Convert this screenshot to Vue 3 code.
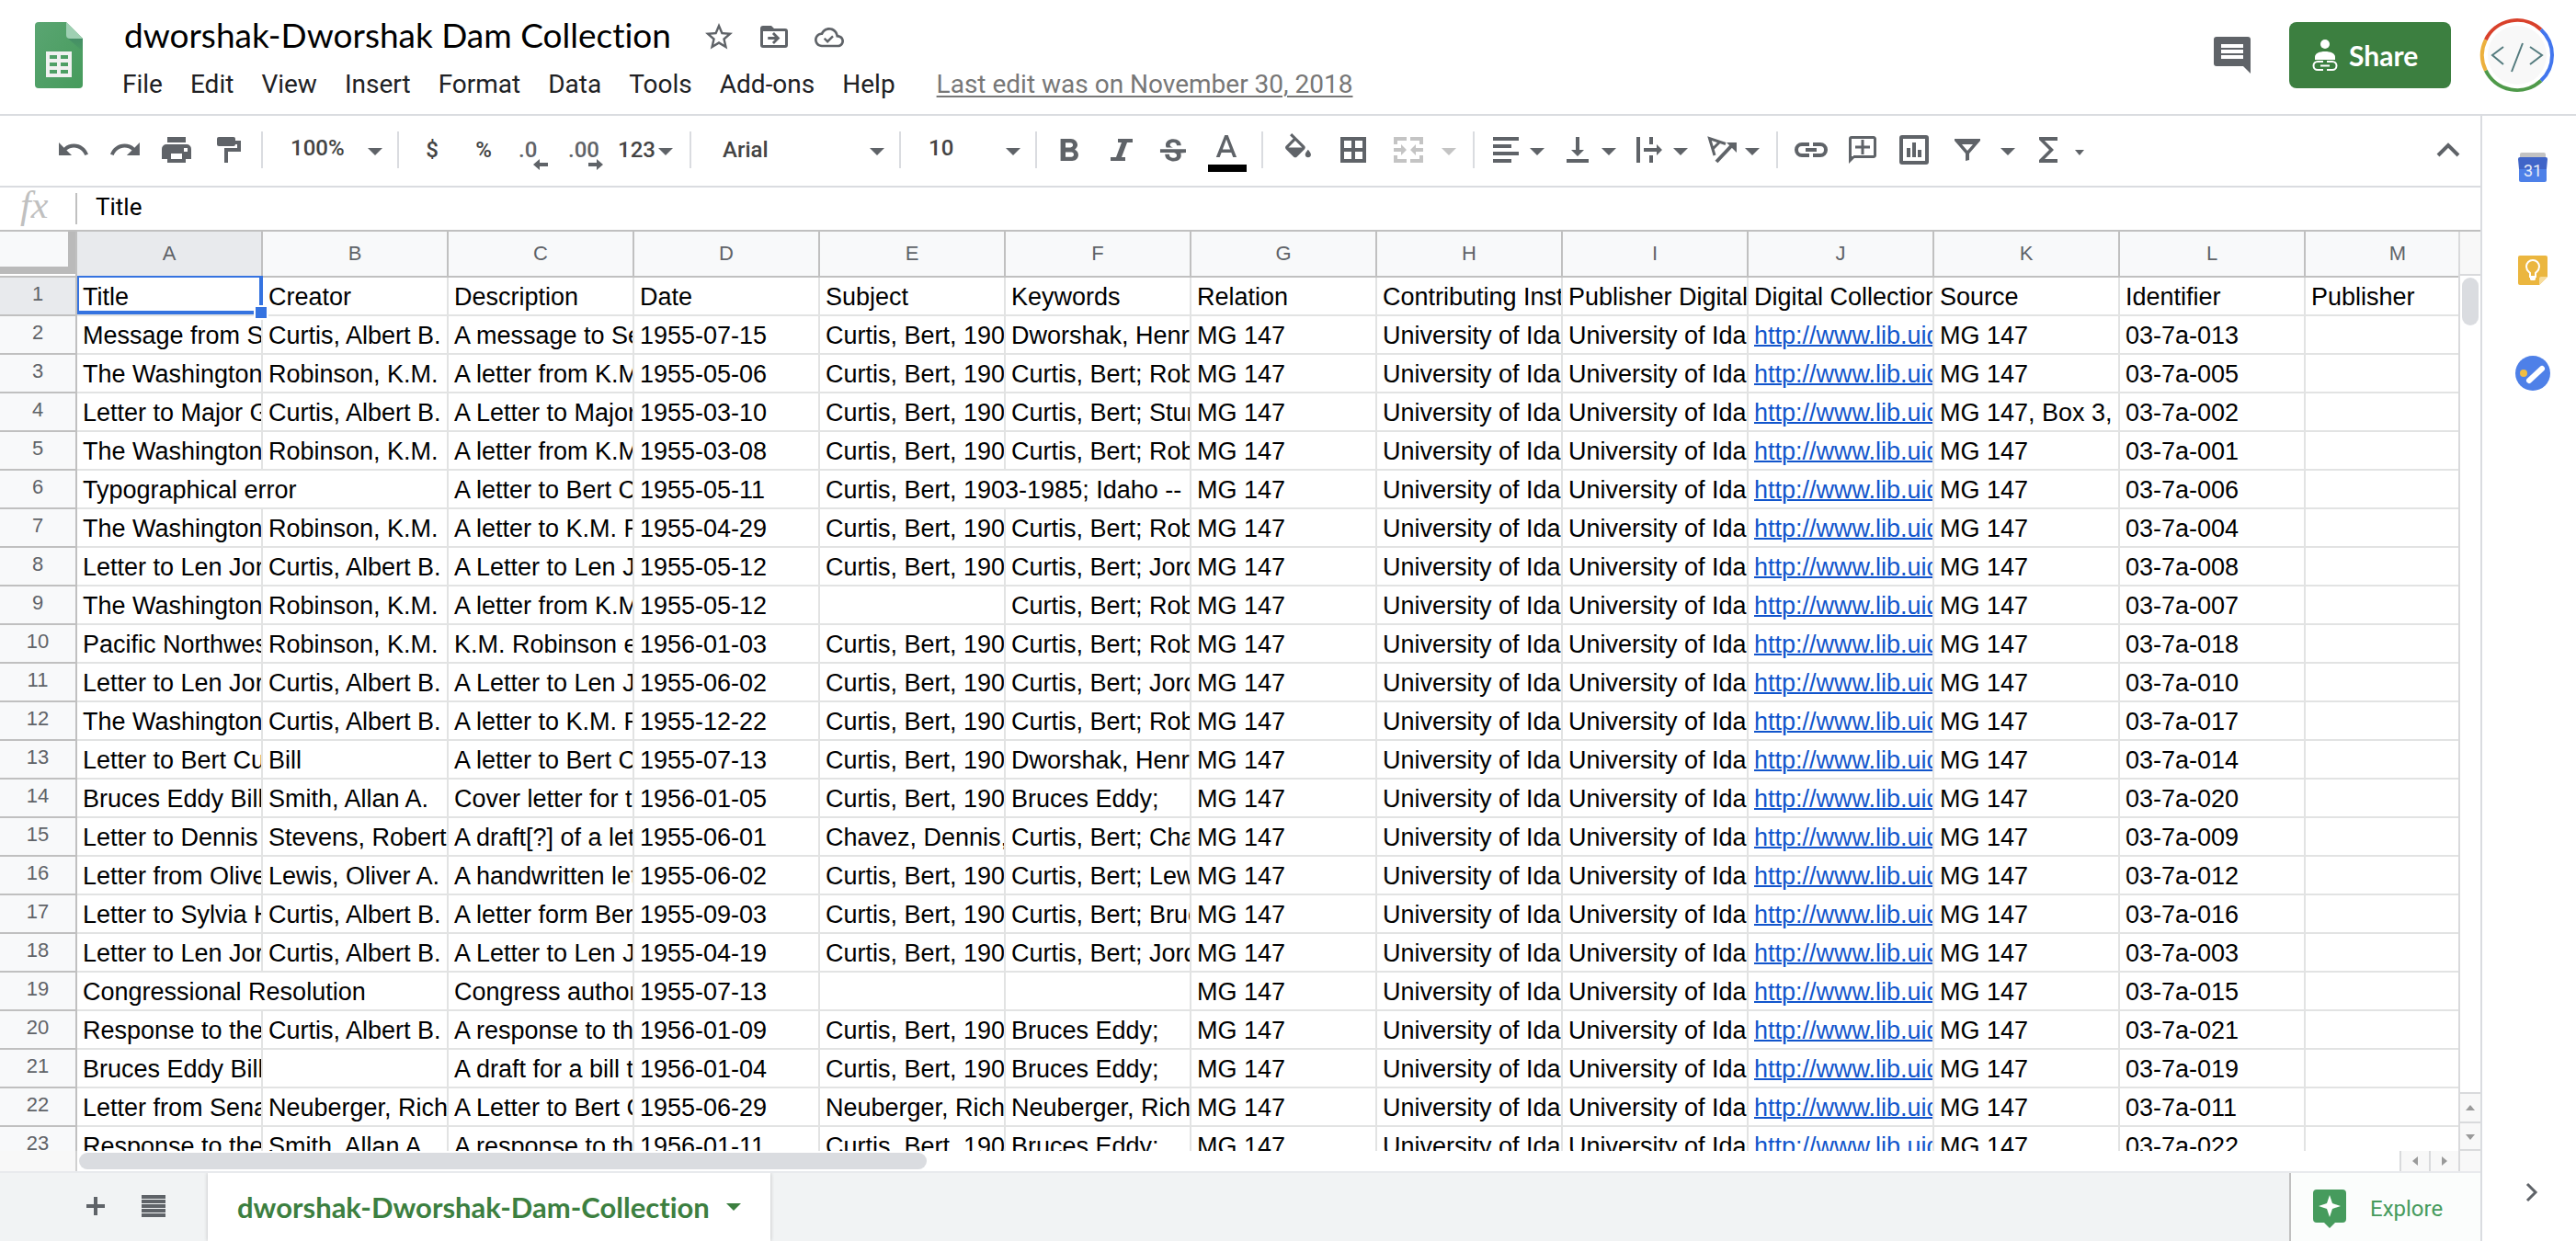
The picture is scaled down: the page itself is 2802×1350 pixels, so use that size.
<script setup>
import { ref } from 'vue'

const title = ref('dworshak-Dworshak Dam Collection')
const formula = ref('Title')
const menus = ['File', 'Edit', 'View', 'Insert', 'Format', 'Data', 'Tools', 'Add-ons', 'Help']
const columns = 'ABCDEFGHIJKLM'.split('')
const headings = ['Title', 'Creator', 'Description', 'Date', 'Subject', 'Keywords', 'Relation', 'Contributing Institution', 'Publisher Digital', 'Digital Collection', 'Source', 'Identifier', 'Publisher']

const CURTIS = 'Curtis, Albert B.'
const ROBINSON = 'Robinson, K.M.'
const BERT = 'Curtis, Bert, 1903-1985'
const ROB = 'Curtis, Bert; Robinson'

// title, creator, description, date, subject, keywords, identifier, source
const records = [
  ['Message from Senator', CURTIS, 'A message to Senator', '1955-07-15', BERT, 'Dworshak, Henry C.', '013'],
  ['The Washington Water', ROBINSON, 'A letter from K.M. Robinson', '1955-05-06', BERT, ROB, '005'],
  ['Letter to Major General', CURTIS, 'A Letter to Major General', '1955-03-10', BERT, 'Curtis, Bert; Sturgis', '002', 'MG 147, Box 3, Folder'],
  ['The Washington Water', ROBINSON, 'A letter from K.M. Robinson', '1955-03-08', BERT, ROB, '001'],
  ['Typographical error', null, 'A letter to Bert Curtis', '1955-05-11', 'Curtis, Bert, 1903-1985; Idaho -- Dams', null, '006'],
  ['The Washington Water', ROBINSON, 'A letter to K.M. Robinson', '1955-04-29', BERT, ROB, '004'],
  ['Letter to Len Jordan', CURTIS, 'A Letter to Len Jordan', '1955-05-12', BERT, 'Curtis, Bert; Jordan', '008'],
  ['The Washington Water', ROBINSON, 'A letter from K.M. Robinson', '1955-05-12', '', ROB, '007'],
  ['Pacific Northwest', ROBINSON, 'K.M. Robinson encloses', '1956-01-03', BERT, ROB, '018'],
  ['Letter to Len Jordan', CURTIS, 'A Letter to Len Jordan', '1955-06-02', BERT, 'Curtis, Bert; Jordan', '010'],
  ['The Washington Water', CURTIS, 'A letter to K.M. Robinson', '1955-12-22', BERT, ROB, '017'],
  ['Letter to Bert Curtis', 'Bill', 'A letter to Bert Curtis', '1955-07-13', BERT, 'Dworshak, Henry C.', '014'],
  ['Bruces Eddy Bill', 'Smith, Allan A.', 'Cover letter for the', '1956-01-05', BERT, 'Bruces Eddy;', '020'],
  ['Letter to Dennis Chavez', 'Stevens, Robert', 'A draft[?] of a letter', '1955-06-01', 'Chavez, Dennis, 1888', 'Curtis, Bert; Chavez', '009'],
  ['Letter from Oliver Lewis', 'Lewis, Oliver A.', 'A handwritten letter', '1955-06-02', BERT, 'Curtis, Bert; Lewis', '012'],
  ['Letter to Sylvia Harris', CURTIS, 'A letter form Bert', '1955-09-03', BERT, 'Curtis, Bert; Bruces', '016'],
  ['Letter to Len Jordan', CURTIS, 'A Letter to Len Jordan', '1955-04-19', BERT, 'Curtis, Bert; Jordan', '003'],
  ['Congressional Resolution', null, 'Congress authorizes', '1955-07-13', '', '', '015'],
  ['Response to the', CURTIS, 'A response to the', '1956-01-09', BERT, 'Bruces Eddy;', '021'],
  ['Bruces Eddy Bill', '', 'A draft for a bill to', '1956-01-04', BERT, 'Bruces Eddy;', '019'],
  ['Letter from Senator', 'Neuberger, Richard', 'A Letter to Bert Curtis', '1955-06-29', 'Neuberger, Richard', 'Neuberger, Richard', '011'],
  ['Response to the', 'Smith, Allan A.', 'A response to the', '1956-01-11', BERT, 'Bruces Eddy;', '022'],
]

// A null value means that the text before it runs on into that cell.
function toCells(values) {
  const cells = []
  for (const text of values) {
    if (text === null) cells[cells.length - 1].span = 2
    else cells.push({ text, span: 1 })
  }
  return cells
}

const rows = [
  toCells(headings),
  ...records.map((r) =>
    toCells([...r.slice(0, 6), 'MG 147', 'University of Idaho', 'University of Idaho', 'http://www.lib.uidaho.edu', r[7] || 'MG 147', '03-7a-' + r[6], '']),
  ),
]
</script>

<template>
  <div class="app">
    <header class="header">
      <svg class="logo" viewBox="0 0 52 72" aria-label="Sheets">
        <defs>
          <linearGradient id="leaf" x1="0" y1="0" x2="1" y2="1">
            <stop offset="0" stop-color="#5aa572" />
            <stop offset="1" stop-color="#469b5c" />
          </linearGradient>
          <linearGradient id="fold" x1="0" y1="0" x2="0" y2="1">
            <stop offset="0" stop-color="#448d66" />
            <stop offset="1" stop-color="#4a9c62" />
          </linearGradient>
        </defs>
        <path fill="url(#leaf)" d="M4 0h30l18 18v50a4 4 0 0 1-4 4H4a4 4 0 0 1-4-4V4a4 4 0 0 1 4-4z" />
        <path fill="url(#fold)" d="M35 17l17 15V18z" />
        <path fill="#9fd0b3" d="M34 0l18 18H38a4 4 0 0 1-4-4z" />
        <path fill="#f1f1f1" fill-rule="evenodd" d="M12 32h28v28H12zM16 36v4h8v-4zM28 36v4h8v-4zM16 44v4h8v-4zM28 44v4h8v-4zM16 52v4h8v-4zM28 52v4h8v-4z" />
      </svg>
      <div class="heading">
        <div class="title-row">
          <input v-model="title" class="title" aria-label="Document name" />
          <button class="plain" aria-label="Star">
            <svg class="i36" viewBox="0 0 24 24"><path d="M22 9.24l-7.19-.62L12 2 9.19 8.63 2 9.24l5.46 4.73L5.82 21 12 17.27 18.18 21l-1.63-7.03L22 9.24zM12 15.4l-3.76 2.27 1-4.28-3.32-2.88 4.38-.38L12 6.1l1.71 4.04 4.38.38-3.32 2.88 1 4.28L12 15.4z" /></svg>
          </button>
          <button class="plain" aria-label="Move">
            <svg class="i36" viewBox="0 0 24 24">
              <path fill-rule="evenodd" d="M20 6h-8l-2-2H4a2 2 0 0 0-2 2v12a2 2 0 0 0 2 2h16a2 2 0 0 0 2-2V8a2 2 0 0 0-2-2zM4 8h16v10H4z" />
              <path fill="none" stroke="currentColor" stroke-width="1.9" d="M7.5 13h7M11.3 9.4l3.6 3.6-3.6 3.6" />
            </svg>
          </button>
          <button class="plain" aria-label="Saved to Drive">
            <svg class="i36" viewBox="-1.5 -2 27 27">
              <path d="M19.35 10.04C18.67 6.59 15.64 4 12 4 9.11 4 6.6 5.64 5.35 8.04 2.34 8.36 0 10.91 0 14c0 3.31 2.69 6 6 6h13c2.76 0 5-2.24 5-5 0-2.64-2.05-4.78-4.65-4.96zM19 18H6c-2.21 0-4-1.79-4-4 0-2.05 1.53-3.76 3.56-3.97l1.07-.11.5-.95C8.08 7.14 9.94 6 12 6c2.62 0 4.88 1.86 5.39 4.43l.3 1.5 1.53.11c1.56.1 2.78 1.41 2.78 2.96 0 1.65-1.35 3-3 3z" />
              <path fill="none" stroke="currentColor" stroke-width="1.8" d="M8 12.8l2.6 2.6 4.4-4.4" />
            </svg>
          </button>
        </div>
        <nav class="menus">
          <button v-for="m in menus" :key="m" class="plain menu">{{ m }}</button>
          <a href="#" class="last-edit">Last edit was on November 30, 2018</a>
        </nav>
      </div>
      <div class="actions">
        <button class="plain" aria-label="Comments">
          <svg class="i40" viewBox="0 0 40 40"><path fill-rule="evenodd" d="M3 0h34a3 3 0 0 1 3 3v37l-8-8H3a3 3 0 0 1-3-3V3a3 3 0 0 1 3-3zM8 8v4h24V8zM8 14v4h24v-4zM8 20v4h24v-4z" /></svg>
        </button>
        <button class="share">
          <svg class="share-icon" viewBox="0 0 28 36">
            <circle cx="14" cy="6" r="5" />
            <path d="M3 23v-3c0-4 5-6 11-6s11 2 11 6v3z" />
            <path fill="none" stroke="#fff" stroke-width="2" d="M12 25H6a4 4 0 0 0 0 9h6M16 25h6a4 4 0 0 1 0 9h-6M9 29.500h10" />
          </svg>
          Share
        </button>
        <button class="plain" aria-label="Account">
          <svg class="avatar" viewBox="0 0 80 80" stroke-width="4">
            <circle cx="40" cy="40" r="32" fill="#f8f8f8" />
            <path stroke="#d9412b" d="M5.800 23.300A38 38 0 0 1 65.900 12.200" />
            <path stroke="#4276ee" d="M65.900 12.200A38 38 0 0 1 65.900 67.800" />
            <path stroke="#4f9a4a" d="M65.900 67.800A38 38 0 0 1 5.800 56.700" />
            <path stroke="#ecb03d" d="M5.800 56.700A38 38 0 0 1 5.800 23.300" />
            <path stroke="#547b7e" stroke-width="2" d="M25 31L13 40l12 10M46 27L34 58M54 31l13 9-13 10" />
          </svg>
        </button>
      </div>
    </header>

    <div class="body">
      <main class="main">
        <div class="toolbar">
          <button class="tool" aria-label="Undo"><svg viewBox="0 0 32 36"><path transform="translate(-3.1 -.9) scale(1.56)" d="M12.500 8c-2.650 0-5.050.99-6.900 2.600L2 7v9h9l-3.620-3.620c1.390-1.160 3.160-1.880 5.120-1.880 3.540 0 6.550 2.310 7.600 5.500l2.370-.78C21.080 11.030 17.150 8 12.500 8z" /></svg></button>
          <button class="tool" aria-label="Redo"><svg viewBox="0 0 32 36"><path transform="translate(-2.4 -.9) scale(1.56)" d="M18.400 10.600C16.550 8.990 14.150 8 11.500 8c-4.650 0-8.580 3.030-9.960 7.220L3.900 16c1.050-3.190 4.050-5.500 7.600-5.500 1.950 0 3.730.72 5.120 1.880L13 16h9V7l-3.600 3.600z" /></svg></button>
          <button class="tool" aria-label="Print"><svg viewBox="0 0 32 36"><path fill-rule="evenodd" d="M6 4h20v6H6zM5 12h22a5 5 0 0 1 5 5v11h-6v4H6v-4H0V17a5 5 0 0 1 5-5zM10 22v6h12v-6zM24 16v4h4v-4z" /></svg></button>
          <button class="tool" aria-label="Paint format"><svg viewBox="0 0 32 36"><rect x="4" y="4" width="20" height="10" rx="2" /><path d="M24 8h6v12H16v12h-4V16h14v-4h-2z" /></svg></button>
          <i class="sep"></i>
          <label class="drop raised"><select aria-label="Zoom"><option>100%</option></select><svg class="caret" viewBox="0 0 16 8"><path d="M0 0h16L8 8z" /></svg></label>
          <i class="sep"></i>
          <button class="tool text">$</button>
          <button class="tool text">%</button>
          <button class="tool" aria-label="Decrease decimal places"><svg viewBox="0 0 32 36"><text class="digits" x="-2" y="26">.0</text><path d="M14 34l7-6v4h9v4h-9v4z" /></svg></button>
          <button class="tool" aria-label="Increase decimal places"><svg viewBox="0 0 32 36"><text class="digits" x="-4" y="26">.00</text><path d="M34 34l-7-6v4h-9v4h9v4z" /></svg></button>
          <button class="tool text formats">123<svg class="caret" viewBox="0 0 16 8"><path d="M0 0h16L8 8z" /></svg></button>
          <i class="sep"></i>
          <label class="drop wide"><select aria-label="Font"><option>Arial</option></select><svg class="caret" viewBox="0 0 16 8"><path d="M0 0h16L8 8z" /></svg></label>
          <i class="sep"></i>
          <label class="drop raised"><select aria-label="Font size"><option>10</option></select><svg class="caret" viewBox="0 0 16 8"><path d="M0 0h16L8 8z" /></svg></label>
          <i class="sep"></i>
          <button class="tool" aria-label="Bold"><svg viewBox="0 0 32 36"><path transform="translate(-7 -.86) scale(1.8 1.714)" d="M15.600 10.790c.97-.67 1.650-1.770 1.650-2.790 0-2.260-1.750-4-4-4H7v14h7.040c2.090 0 3.710-1.700 3.710-3.790 0-1.520-.86-2.820-2.150-3.420zM10 6.500h3c.83 0 1.500.67 1.500 1.500s-.67 1.500-1.500 1.500h-3v-3zm3.500 9H10v-3h3.500c.83 0 1.500.67 1.500 1.500s-.67 1.500-1.500 1.500z" /></svg></button>
          <button class="tool" aria-label="Italic"><svg viewBox="0 0 32 36"><path d="M12 6h16v4h-6l-6 16h4v4H4v-4h6l6-16h-4z" /></svg></button>
          <button class="tool" aria-label="Strikethrough"><svg viewBox="0 0 32 36"><path transform="translate(-2.7 1.6) scale(1.556)" d="M7.240 8.750c-.26-.48-.39-1.030-.39-1.670 0-.61.13-1.160.4-1.670.26-.5.63-.93 1.110-1.290.48-.35 1.050-.63 1.700-.83.66-.19 1.390-.29 2.180-.29.81 0 1.540.11 2.210.34.66.22 1.230.54 1.690.94.47.4.83.88 1.080 1.430.25.55.38 1.150.38 1.810h-3.010c0-.31-.05-.59-.15-.85-.09-.27-.24-.49-.44-.68-.2-.19-.45-.33-.75-.44-.3-.1-.66-.16-1.060-.16-.39 0-.74.04-1.030.13-.29.09-.53.21-.72.36-.19.16-.34.34-.44.55-.1.21-.15.43-.15.66 0 .48.25.88.74 1.210.38.25.77.48 1.410.7H7.390c-.05-.08-.11-.17-.15-.25zM21 12.500v-2.500H3v2.500h9.620c.18.07.4.14.55.2.37.17.66.34.87.51.21.17.35.36.43.57.07.2.11.43.11.69 0 .23-.05.45-.14.66-.09.2-.23.38-.42.53-.19.15-.42.26-.71.35-.29.08-.63.13-1.010.13-.43 0-.83-.04-1.180-.13s-.66-.23-.91-.42c-.25-.19-.45-.44-.59-.75-.14-.31-.25-.76-.25-1.210H6.400c0 .55.08 1.130.24 1.580.16.45.37.85.65 1.210.28.35.6.66.98.92.37.26.78.48 1.220.65.44.17.9.3 1.380.39.48.08.96.13 1.440.13.8 0 1.530-.09 2.180-.28s1.210-.45 1.670-.79c.46-.34.82-.77 1.070-1.270s.38-1.070.38-1.710c0-.6-.1-1.140-.31-1.610z" /></svg></button>
          <button class="tool w36" aria-label="Text color"><svg viewBox="0 0 36 36"><path transform="translate(-2.6 -3.1) scale(1.714)" d="M11 3L5.500 17h2.250l1.120-3h6.250l1.120 3h2.250L13 3h-2zm-1.380 9L12 5.670 14.380 12H9.620z" /><path fill="#000" d="M-2 34h42v8H-2z" /></svg></button>
          <i class="sep"></i>
          <button class="tool w36" aria-label="Fill color"><svg viewBox="0 0 36 36"><path transform="translate(-.6 0) scale(1.55)" d="M16.560 8.940L7.620 0 6.210 1.410l2.380 2.380-5.150 5.150c-.59.59-.59 1.540 0 2.120l5.500 5.500c.29.29.68.44 1.060.44s.77-.15 1.060-.44l5.500-5.500c.59-.58.59-1.530 0-2.120zM5.210 10L10 5.210 14.790 10H5.210zM19 11.500s-2 2.170-2 3.500c0 1.100.9 2 2 2s2-.9 2-2c0-1.330-2-3.500-2-3.500z" /></svg></button>
          <button class="tool w36" aria-label="Borders"><svg viewBox="0 0 36 36"><path fill-rule="evenodd" d="M4 4h28v28H4zM8 8v8h8V8zM20 8v8h8V8zM8 20v8h8v-8zM20 20v8h8v-8z" /></svg></button>
          <button class="tool pair merge" disabled aria-label="Merge cells"><svg class="w36" viewBox="0 0 36 36"><path d="M2 4h14v4H6v4H2zM20 4h14v8h-4V8H20zM2 24h4v4h10v4H2zM30 24h4v8H20v-4h10zM2 16h8v-4l6 6-6 6v-4H2zM34 16h-8v-4l-6 6 6 6v-4h8z" /></svg><svg class="caret" viewBox="0 0 16 8"><path d="M0 0h16L8 8z" /></svg></button>
          <i class="sep"></i>
          <button class="tool pair" aria-label="Horizontal align"><svg viewBox="0 0 32 36"><path d="M0 4h28v4H0zM0 12h20v4H0zM0 20h28v4H0zM0 28h20v4H0z" /></svg><svg class="caret" viewBox="0 0 16 8"><path d="M0 0h16L8 8z" /></svg></button>
          <button class="tool pair" aria-label="Vertical align"><svg viewBox="0 0 32 36"><path d="M2 28h24v4H2zM12 4h4v14h5l-7 7-7-7h5z" /></svg><svg class="caret" viewBox="0 0 16 8"><path d="M0 0h16L8 8z" /></svg></button>
          <button class="tool pair" aria-label="Text wrapping"><svg viewBox="0 0 32 36"><path d="M0 4h4v28H0zM14 4h4v8h-4zM14 24h4v8h-4zM8 16h14v-4l6 6-6 6v-4H8z" /></svg><svg class="caret" viewBox="0 0 16 8"><path d="M0 0h16L8 8z" /></svg></button>
          <button class="tool pair" aria-label="Text rotation"><svg viewBox="0 0 32 36"><path fill="none" stroke="currentColor" stroke-width="3" d="M19 11.500L1.500 5.500 7 24M13 9l-8 8" /><path fill="none" stroke="currentColor" stroke-width="4" d="M9 31l16-17" /><path d="M20 10h11v11z" /></svg><svg class="caret" viewBox="0 0 16 8"><path d="M0 0h16L8 8z" /></svg></button>
          <i class="sep"></i>
          <button class="tool" aria-label="Insert link"><svg viewBox="0 0 32 36"><path fill="none" stroke="currentColor" stroke-width="4" d="M14 12H6a6 6 0 0 0 0 12h8M18 12h8a6 6 0 0 1 0 12h-8M10 18h12" /></svg></button>
          <button class="tool" aria-label="Insert comment"><svg viewBox="0 0 32 36"><path fill="none" stroke="currentColor" stroke-width="3" d="M2.500 30V6a1.500 1.500 0 0 1 1.500-1.500h24a1.500 1.500 0 0 1 1.500 1.500v18a1.500 1.500 0 0 1-1.500 1.500H6M8 15h16M16 7v16" /><path d="M1 25h8l-8 8z" /></svg></button>
          <button class="tool" aria-label="Insert chart"><svg viewBox="0 0 32 36"><rect x="2" y="4" width="28" height="28" rx="1" fill="none" stroke="currentColor" stroke-width="4" /><path d="M8 16h4v10H8zM14 10h4v16h-4zM20 18h4v8h-4z" /></svg></button>
          <button class="tool pair filter" aria-label="Filter"><svg viewBox="0 0 32 36"><path fill-rule="evenodd" d="M4 6h28v2L20 22v7l-4 1v-8L4 8zM12 12l6 7 6-7z" /></svg><svg class="caret" viewBox="0 0 16 8"><path d="M0 0h16L8 8z" /></svg></button>
          <button class="tool pair functions" aria-label="Functions"><svg viewBox="0 0 32 36"><path d="M4 4h20v4H10l10 10-10 10h14v4H4v-3l11-11L4 7z" /></svg><svg class="caret small" viewBox="0 0 16 8"><path d="M3 2h10l-5 6z" /></svg></button>
          <button class="tool hide" aria-label="Hide the menus"><svg viewBox="0 0 32 36"><path fill="none" stroke="currentColor" stroke-width="4" d="M6 24l11-11 11 11" /></svg></button>
        </div>

        <div class="formula">
          <span class="fx">fx</span>
          <input v-model="formula" class="formula-input" aria-label="Formula bar" />
        </div>

        <div class="sheet">
          <div class="viewport">
            <table>
              <colgroup>
                <col class="col-head" />
                <col v-for="c in columns" :key="c" class="col" />
              </colgroup>
              <thead>
                <tr>
                  <td class="corner"><div class="select-all"></div></td>
                  <th v-for="c in columns" :key="c" scope="col" :class="{ active: c === 'A' }">{{ c }}</th>
                </tr>
              </thead>
              <tbody>
                <tr v-for="(cells, r) in rows" :key="r">
                  <th scope="row" :class="{ active: r === 0 }">{{ r + 1 }}</th>
                  <td v-for="(cell, c) in cells" :key="c" :colspan="cell.span">
                    <div class="value">
                      <a v-if="cell.text.startsWith('http')" :href="cell.text">{{ cell.text }}</a>
                      <template v-else>{{ cell.text }}</template>
                    </div>
                    <div v-if="r === 0 && c === 0" class="selection"><i class="handle"></i></div>
                  </td>
                </tr>
              </tbody>
            </table>
          </div>
          <div class="vscroll">
            <div class="vtop"></div>
            <div class="vtrack"><div class="vthumb"></div></div>
            <button class="step" aria-label="Scroll up"><svg viewBox="0 0 10 6"><path d="M0 6h10L5 0z" /></svg></button>
            <button class="step" aria-label="Scroll down"><svg viewBox="0 0 10 6"><path d="M0 0h10L5 6z" /></svg></button>
          </div>
        </div>
        <div class="hscroll">
          <div class="hleft"></div>
          <div class="htrack"><div class="hthumb"></div></div>
          <button class="hstep" aria-label="Scroll left"><svg viewBox="0 0 6 10"><path d="M6 0v10L0 5z" /></svg></button>
          <button class="hstep" aria-label="Scroll right"><svg viewBox="0 0 6 10"><path d="M0 0v10l6-5z" /></svg></button>
          <div class="hcorner"></div>
        </div>

        <footer class="tabs">
          <button class="plain add" aria-label="Add sheet"><svg viewBox="0 0 20 20"><path d="M8 0h4v8h8v4h-8v8H8v-8H0V8h8z" /></svg></button>
          <button class="plain all" aria-label="All sheets"><svg viewBox="0 0 26 24"><path d="M0 0h26v4H0zM0 5h26v4H0zM0 10h26v4H0zM0 15h26v4H0zM0 20h26v4H0z" /></svg></button>
          <button class="tab">dworshak-Dworshak-Dam-Collection<svg class="caret" viewBox="0 0 16 8"><path d="M0 0h16L8 8z" /></svg></button>
          <button class="explore">
            <svg viewBox="0 0 36 42"><path d="M4 0h28a4 4 0 0 1 4 4v28a4 4 0 0 1-4 4h-8l-6 6-6-6H4a4 4 0 0 1-4-4V4a4 4 0 0 1 4-4z" /><path fill="#fff" d="M18 6l3 9 9 3-9 3-3 9-3-9-9-3 9-3z" /></svg>
            Explore
          </button>
        </footer>
      </main>

      <aside class="side">
        <button class="plain" aria-label="Calendar">
          <svg class="app-icon" viewBox="0 0 40 40">
            <path fill="#c2c2c2" d="M8 4h24a2 2 0 0 1 2 2v4H6V6a2 2 0 0 1 2-2z" />
            <path fill="#4065c8" d="M4 11q0-2 2-2h28q2 0 2 2l-1 11H5z" />
            <path fill="#4d80e8" d="M5 22h30v12a2 2 0 0 1-2 2H7a2 2 0 0 1-2-2z" />
            <text x="20" y="30" text-anchor="middle" class="day">31</text>
          </svg>
        </button>
        <button class="plain" aria-label="Keep">
          <svg class="app-icon" viewBox="0 0 40 40">
            <path fill="#ebb63f" d="M6 4h28a2 2 0 0 1 2 2v21l-9 9H6a2 2 0 0 1-2-2V6a2 2 0 0 1 2-2z" />
            <path fill="#f7dc9c" d="M27 36v-7a2 2 0 0 1 2-2h7z" />
            <path fill="none" stroke="#fff" stroke-width="2" d="M17 27v-4c-2-2-4-3-4-7a7 7 0 0 1 14 0c0 4-2 5-4 7v4z" />
            <path fill="#fff" d="M17 26h6v4l-1 1h-4l-1-1z" />
          </svg>
        </button>
        <button class="plain" aria-label="Tasks">
          <svg class="app-icon" viewBox="0 0 40 40">
            <circle cx="20" cy="20" r="19" fill="#4e80e8" />
            <circle cx="10" cy="20" r="4" fill="#f2bd42" />
            <path fill="none" stroke="#fff" stroke-width="6" stroke-linecap="round" d="M16 28l14-13" />
          </svg>
        </button>
        <button class="plain collapse" aria-label="Hide side panel">
          <svg class="app-icon" viewBox="0 0 40 40"><path fill="none" stroke="currentColor" stroke-width="3" d="M14 10l9 9-9 9" /></svg>
        </button>
      </aside>
    </div>
  </div>
</template>

<style>
body {
  margin: 0;
}
</style>

<style scoped>
.app {
  display: flex;
  flex-direction: column;
  height: 100vh;
  overflow: hidden;
  background: #fff;
  color: #5f6368;
  font-family: Roboto, sans-serif;
}
.app * {
  box-sizing: border-box;
}
button {
  margin: 0;
  padding: 0;
  border: 0;
  background: none;
  color: inherit;
  font: inherit;
}
svg {
  display: block;
  flex: none;
  fill: currentColor;
  overflow: visible;
}
.plain {
  display: flex;
  align-items: center;
}
.i36 {
  width: 36px;
  height: 36px;
}
.i40 {
  width: 40px;
  height: 40px;
}

.header {
  display: flex;
  align-items: flex-start;
  height: 126px;
  flex: none;
  padding: 14px 24px 0 38px;
  border-bottom: 2px solid #dadce0;
}
.logo {
  width: 52px;
  height: 72px;
  margin-top: 10px;
}
.heading {
  margin-left: 43px;
}
.title-row {
  display: flex;
  align-items: center;
  height: 52px;
  gap: 24px;
}
.title {
  width: 607px;
  height: 52px;
  padding: 0 0 6px 2px;
  border: 0;
  background: none;
  color: #000;
  font: 37px Lato, sans-serif;
  font-variant-ligatures: none;
}
.menus {
  display: flex;
  gap: 30px;
  margin-top: 4px;
  line-height: 44px;
  font-size: 28px;
  color: #202124;
}
.last-edit {
  margin-left: 15px;
  color: #777;
  text-decoration-thickness: 2px;
  text-underline-offset: 3px;
}
.actions {
  display: flex;
  align-items: center;
  margin-left: auto;
  padding-top: 6px;
}
.share {
  display: flex;
  align-items: center;
  gap: 12px;
  width: 176px;
  height: 72px;
  margin: 0 32px 0 42px;
  padding-left: 25px;
  border-radius: 8px;
  background: #3c7f40;
  color: #fff;
  font: 700 30px Lato, sans-serif;
}
.share-icon {
  width: 28px;
  height: 36px;
}
.avatar {
  width: 80px;
  height: 80px;
  fill: none;
}

.body {
  display: flex;
  flex: 1;
  min-height: 0;
}
.main {
  display: flex;
  flex-direction: column;
  flex: 1;
  min-width: 0;
}

.toolbar {
  display: flex;
  align-items: center;
  flex: none;
  gap: 24px;
  height: 78px;
  padding: 0 20px 2px 64px;
  border-bottom: 2px solid #dadce0;
}
.sep {
  width: 2px;
  height: 40px;
  margin: 0 -4px;
  background: #dadce0;
}
.tool {
  display: flex;
  align-items: center;
  justify-content: center;
  flex: none;
  width: 32px;
  height: 36px;
}
.tool svg {
  width: 32px;
  height: 36px;
}
.w36,
.w36 svg,
.tool svg.w36 {
  width: 36px;
}
.tool .caret,
.caret {
  width: 16px;
  height: 8px;
  margin-top: 4px;
}
.text,
select {
  color: #444;
  font: 500 24px Roboto, sans-serif;
}
.digits {
  font: 500 24px Roboto, sans-serif;
}
.formats {
  justify-content: space-between;
  width: 60px;
  margin: 0 -2px 0 -6px;
}
.formats .caret,
.drop .caret {
  color: #5f6368;
}
.drop {
  display: flex;
  align-items: center;
  flex: none;
  width: 114px;
  height: 36px;
  margin: 0 -4px;
}
.drop.wide {
  width: 194px;
}
select {
  flex: 1;
  min-width: 0;
  height: 36px;
  padding: 0 0 0 14px;
  border: 0;
  background: none;
  appearance: none;
}
.wide select {
  padding-left: 18px;
}
.raised select {
  padding-bottom: 4px;
}
.pair {
  width: auto;
  gap: 8px;
  margin-right: -2px;
}
.merge {
  gap: 18px;
  color: #c4c4c4;
}
.filter {
  gap: 22px;
}
.hide {
  margin-left: auto;
}

.formula {
  display: flex;
  align-items: center;
  flex: none;
  height: 48px;
  border-bottom: 2px solid #c0c0c0;
}
.fx {
  width: 84px;
  height: 34px;
  padding-left: 22px;
  border-right: 2px solid #c0c0c0;
  color: #c0c0c0;
  font: italic 42px/26px "Liberation Serif", serif;
}
.formula-input {
  flex: 1;
  height: 40px;
  padding: 0 0 4px 20px;
  border: 0;
  background: none;
  color: #000;
  font: 26px Roboto, sans-serif;
}

.sheet {
  display: flex;
  flex: 1;
  min-height: 0;
}
.viewport {
  flex: 1;
  min-width: 0;
  overflow: hidden;
  font-family: "Liberation Sans", Arial, sans-serif;
}
table {
  width: 2710px;
  table-layout: fixed;
  border-collapse: separate;
  border-spacing: 0;
}
.col-head {
  width: 84px;
}
.col {
  width: 202px;
}
th {
  padding: 0;
  background: #f8f9fa;
  border-right: 2px solid #c0c0c0;
  border-bottom: 2px solid #c0c0c0;
  color: #5f6368;
  font-size: 22px;
  font-weight: 400;
  text-align: center;
}
thead th {
  height: 50px;
  line-height: 48px;
}
tbody th {
  height: 42px;
  padding-bottom: 4px;
  line-height: 36px;
}
th.active {
  background: #e8eaed;
}
.corner {
  height: 50px;
  padding: 0;
  vertical-align: top;
  border: solid #c0c0c0;
  border-width: 0 2px 2px 0;
}
.select-all {
  height: 46px;
  background: #f8f9fa;
  border: solid #bababa;
  border-width: 0 8px 8px 0;
}
tbody td {
  position: relative;
  height: 42px;
  padding: 0;
  border-right: 2px solid #e2e3e3;
  border-bottom: 2px solid #e2e3e3;
}
.value {
  height: 40px;
  padding-left: 6px;
  overflow: hidden;
  white-space: nowrap;
  color: #000;
  font-size: 27px;
  line-height: 42px;
}
.value a {
  color: #1155cc;
  text-decoration-thickness: 2px;
}
.selection {
  position: absolute;
  z-index: 1;
  inset: -2px -2px 0 0;
  border: solid #3573e0;
  border-width: 2px 4px 4px 2px;
}
.handle {
  position: absolute;
  right: -10px;
  bottom: -10px;
  width: 16px;
  height: 16px;
  border: 2px solid #fff;
  background: #3573e0;
}

.vscroll {
  display: flex;
  flex-direction: column;
  flex: none;
  width: 24px;
  border-left: 2px solid #d9dadc;
}
.vtop {
  height: 48px;
  background: #f8f8f8;
  border-bottom: 2px solid #d9dadc;
}
.vtrack {
  flex: 1;
  padding: 2px;
}
.vthumb {
  height: 52px;
  border-radius: 9px;
  background: #dadce0;
}
.step,
.hstep {
  display: flex;
  align-items: center;
  justify-content: center;
  background: #f8f8f8;
  color: #9a9a9a;
}
.step {
  height: 32px;
  border-top: 2px solid #d9dadc;
}
.step svg {
  width: 10px;
  height: 6px;
}
.hscroll {
  display: flex;
  flex: none;
  height: 24px;
  border-bottom: 2px solid #e8eaed;
}
.hleft {
  width: 84px;
  background: #f8f8f8;
  border-right: 2px solid #d0d0d0;
}
.htrack {
  flex: 1;
  padding: 2px;
}
.hthumb {
  width: 922px;
  height: 18px;
  border-radius: 9px;
  background: #dadce0;
}
.hstep {
  width: 32px;
  border-left: 2px solid #d9dadc;
}
.hstep svg {
  width: 6px;
  height: 10px;
}
.hcorner {
  width: 24px;
  background: #f8f8f8;
  border: solid #d9dadc;
  border-width: 2px 0 0 2px;
  margin-top: -2px;
}

.tabs {
  display: flex;
  flex: none;
  height: 74px;
  background: #f1f3f4;
}
.add,
.all {
  padding-bottom: 2px;
}
.add {
  margin-left: 94px;
}
.add svg {
  width: 20px;
  height: 20px;
}
.all {
  margin-left: 40px;
}
.all svg {
  width: 26px;
  height: 24px;
}
.tab {
  display: flex;
  align-items: center;
  gap: 18px;
  margin-left: 46px;
  padding: 0 32px;
  background: #fff;
  box-shadow: 0 0 4px rgba(60, 64, 67, 0.3);
  clip-path: inset(0 -4px);
  color: #3c7f40;
  font: 700 31px Lato, sans-serif;
  font-variant-ligatures: none;
}
.tab .caret {
  margin-top: 0;
}
.explore {
  display: flex;
  align-items: center;
  gap: 26px;
  width: 208px;
  margin-left: auto;
  padding-left: 24px;
  padding-top: 4px;
  border-left: 2px solid #c0c0c0;
  background: #fbfdfc;
  color: #469b5d;
  font-size: 24px;
}
.explore svg {
  width: 36px;
  height: 42px;
}

.side {
  display: flex;
  flex-direction: column;
  align-items: center;
  gap: 72px;
  width: 104px;
  flex: none;
  padding: 36px 0 32px 8px;
  border-left: 2px solid #dadce0;
}
.app-icon {
  width: 40px;
  height: 40px;
}
.day {
  fill: #e8ecf8;
  font: 18px Roboto, sans-serif;
}
.collapse {
  margin-top: auto;
}
</style>
